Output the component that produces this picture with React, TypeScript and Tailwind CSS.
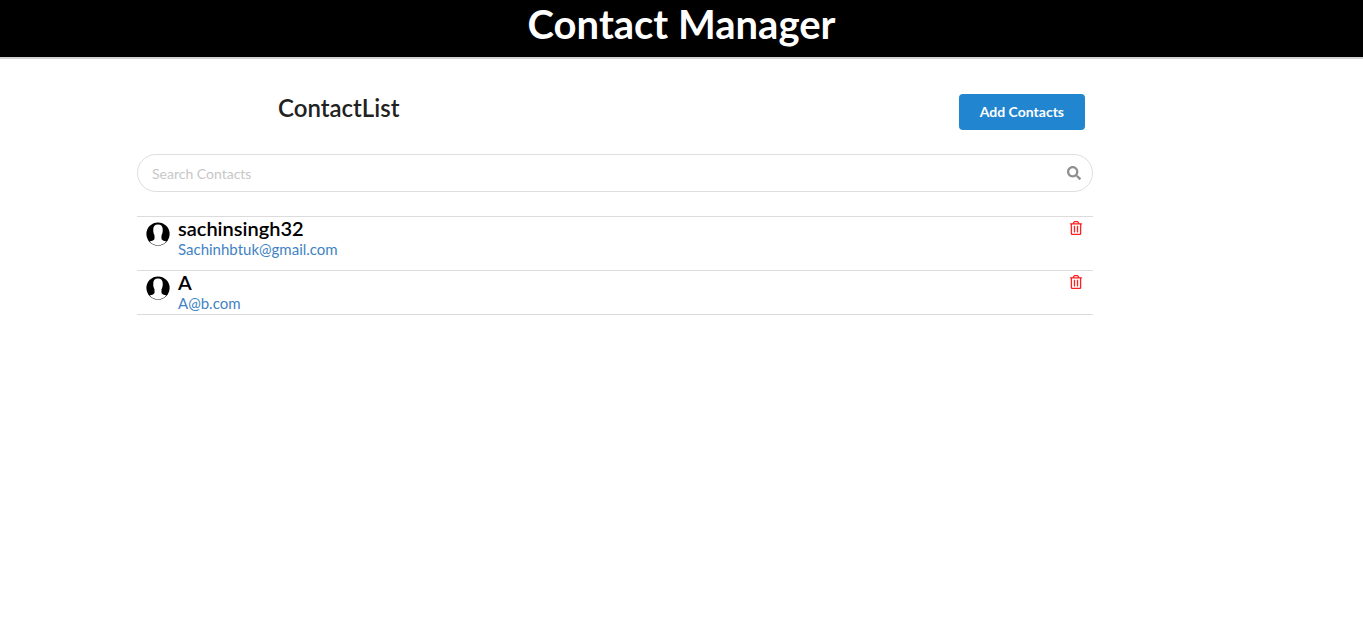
import { useState } from "react";
import { FaRegTrashAlt, FaSearch } from "react-icons/fa";

interface Contact {
  id: number;
  name: string;
  email: string;
}

const initialContacts: Contact[] = [
  { id: 1, name: "sachinsingh32", email: "Sachinhbtuk@gmail.com" },
  { id: 2, name: "A", email: "A@b.com" },
];

function Avatar() {
  return (
    <svg viewBox="0 0 24 24" className="size-6 shrink-0" aria-hidden="true">
      <circle cx="12" cy="12" r="11.6" fill="#000" />
      <path
        fill="#fff"
        d="M12 2.500c-3.200 0-4.700 1.900-4.700 4.600 0 1.200-.1 1.900.1 2.900.2 1.400.6 2.200 1 3 .2 1.500.2 3 0 4.200-.8 1.300-2.900 1.700-4.700 2.300a11 11 0 0 0 16.600 0c-1.800-.6-3.900-1-4.700-2.300-.2-1.200-.2-2.700 0-4.200.4-.8.8-1.600 1-3 .2-1 .1-1.700.1-2.900 0-2.700-1.500-4.600-4.700-4.600z"
      />
    </svg>
  );
}

function Header() {
  return (
    <header className="border-b-2 border-[#d4d2d2] bg-black pb-2 text-center">
      <h1 className="text-[40px] leading-[49px] font-bold text-white">Contact Manager</h1>
    </header>
  );
}

function ContactRow({ contact, onDelete }: { contact: Contact; onDelete: () => void }) {
  return (
    <li className="flex items-start border-t border-[#dcdcdc] pb-2.5 last:border-b last:pb-0">
      <div className="pt-[5px] pr-2 pl-[9px]">
        <Avatar />
      </div>
      <div className="flex-1">
        <div className="text-xl leading-[22px] font-semibold text-black">{contact.name}</div>
        <a href={`mailto:${contact.email}`} className="block text-[15px] leading-[21px] text-[#4183c4]">
          {contact.email}
        </a>
      </div>
      <button
        type="button"
        aria-label={`Delete ${contact.name}`}
        onClick={onDelete}
        className="mt-1 mr-2.5 cursor-pointer text-[#ff2020]"
      >
        <FaRegTrashAlt className="size-[14px]" />
      </button>
    </li>
  );
}

export default function App() {
  const [contacts, setContacts] = useState(initialContacts);
  const [query, setQuery] = useState("");
  const visible = contacts.filter((c) =>
    `${c.name} ${c.email}`.toLowerCase().includes(query.toLowerCase()),
  );

  return (
    <div className="bg-white font-['Lato',sans-serif] text-sm text-[#212121]">
      <Header />
      <main className="mr-[270px] ml-[137px] pt-[35px]">
        <div className="flex items-start justify-between pr-2 pl-[141px]">
          <h2 className="text-2xl leading-7 font-semibold">ContactList</h2>
          <button
            type="button"
            className="h-9 cursor-pointer rounded bg-[#2185d0] px-[21px] text-sm font-bold text-white"
          >
            Add Contacts
          </button>
        </div>
        <div className="relative mt-6">
          <input
            type="text"
            aria-label="Search Contacts"
            placeholder="Search Contacts"
            value={query}
            onChange={(e) => setQuery(e.target.value)}
            className="block h-[38px] w-full rounded-full border border-[#dededf] pr-9 pl-[14px] text-sm outline-none placeholder:text-[#c7c7c7]"
          />
          <FaSearch className="pointer-events-none absolute top-3 right-3 size-[14px] text-[#8f8f8f]" />
        </div>
        <ul className="mt-6">
          {visible.map((c) => (
            <ContactRow
              key={c.id}
              contact={c}
              onDelete={() => setContacts(contacts.filter((o) => o.id !== c.id))}
            />
          ))}
        </ul>
      </main>
    </div>
  );
}
